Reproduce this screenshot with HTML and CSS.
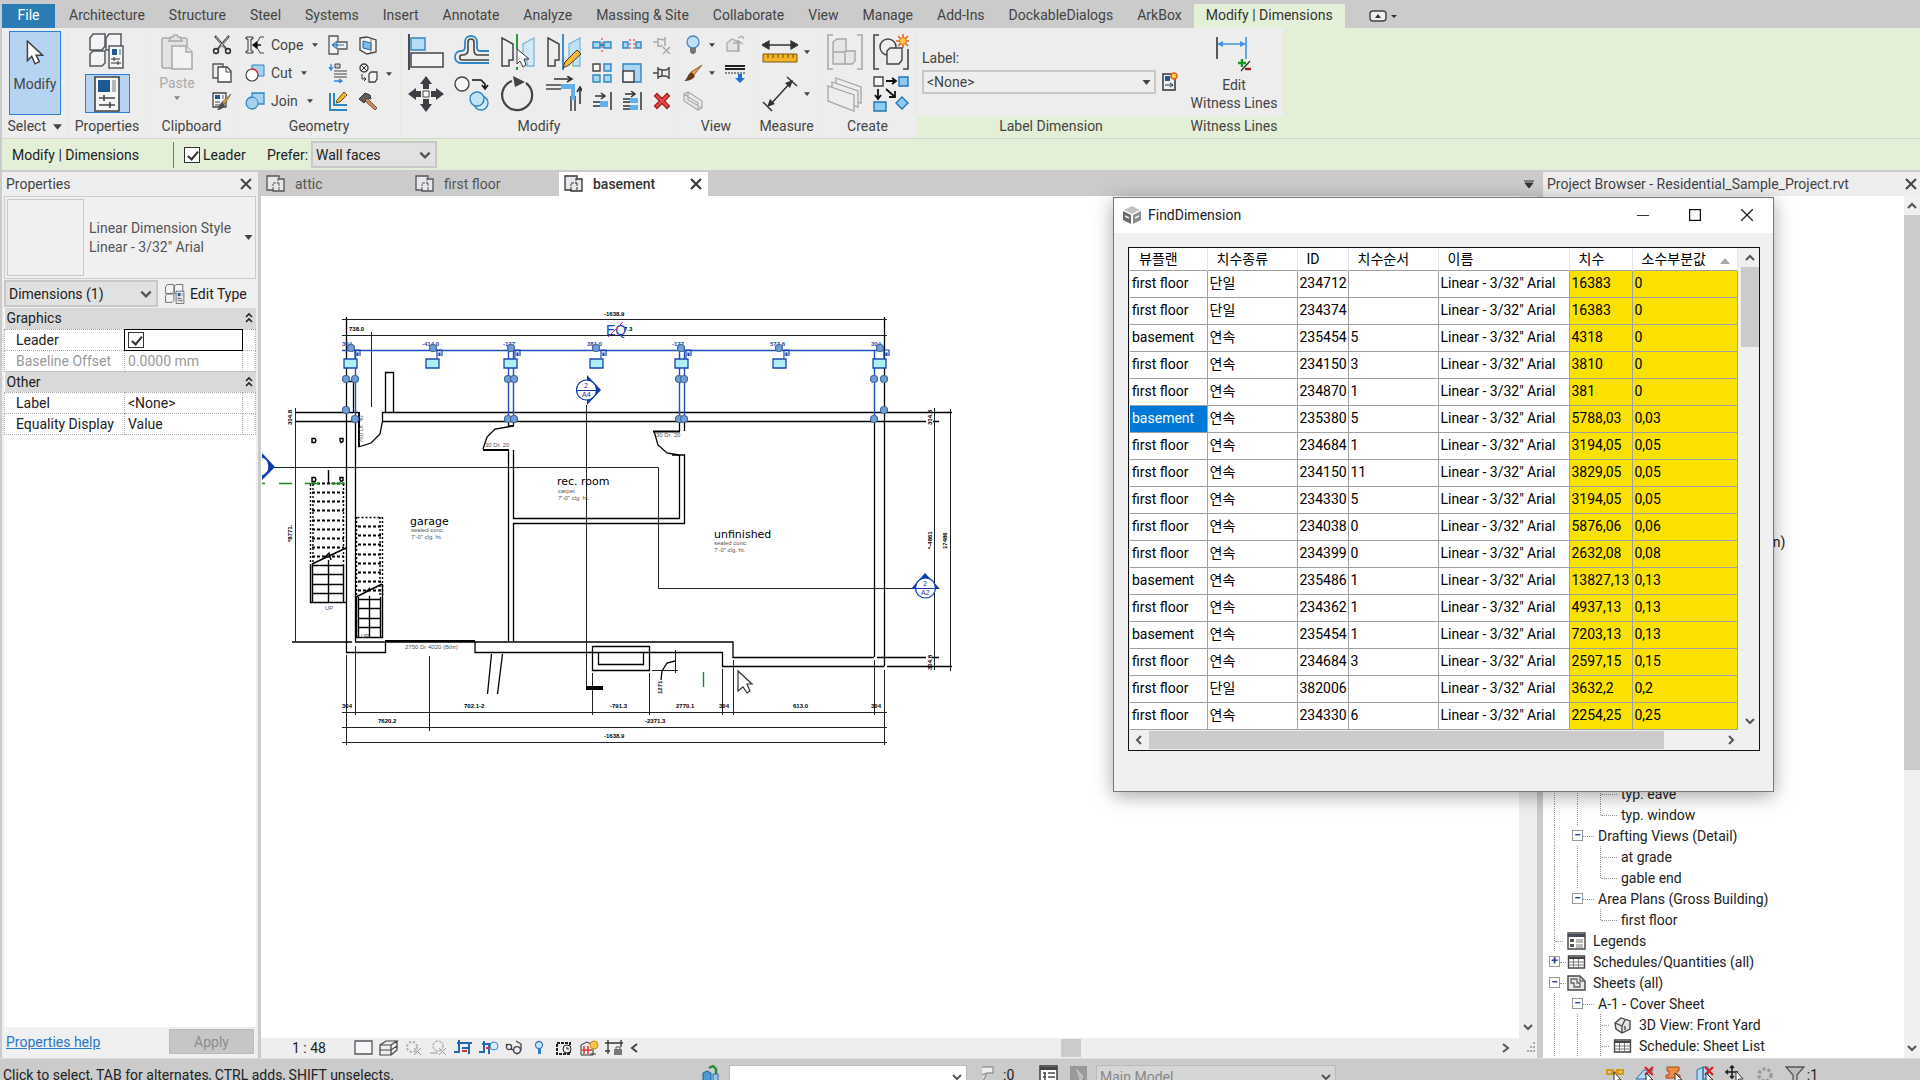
FILE: index.html
```html
<!DOCTYPE html>
<html lang="ko">
<head>
  <meta charset="UTF-8" />
  <meta name="viewport" content="width=device-width, initial-scale=1.0"/>
  <title>Residential_Sample_Project.rvt</title>
  <link rel="stylesheet" href="styles.css">
</head>
<body>

  <!-- shared icon shapes -->
  <svg class="defs" aria-hidden="true">
    <symbol id="caret" viewBox="0 0 8 5"><path d="M0 0h8L4 5z" fill="#444"/></symbol>
    <symbol id="chev-down" viewBox="0 0 12 12"><path d="M2 4l4 4 4-4" fill="none" stroke="currentColor" stroke-width="2"/></symbol>
    <symbol id="cross" viewBox="0 0 12 12"><path d="M1 1l10 10M11 1L1 11" stroke="currentColor" stroke-width="2"/></symbol>
    <symbol id="cursor" viewBox="0 0 16 24"><path d="M1 1v18l4-4 3 7 4-2-3-6h6z" fill="#fff" stroke="#444" stroke-width="1.4"/></symbol>
    <symbol id="sheet" viewBox="0 0 20 18"><path d="M1 1h12v3h5v12H7v-1H1z" fill="#e6e8ec" stroke="currentColor" stroke-width="1.3"/><path d="M7 15V9M12 3v5M7 8h6M13 8v7" fill="none" stroke="currentColor" stroke-dasharray="3 1"/></symbol>
    <symbol id="grid4" viewBox="0 0 36 36">
      <g fill="#f4f4f5" stroke="#555a62" stroke-width="1.5"><path d="M1 5l3-4h12v12l-3 4H1zM17 5l3-4h12v12l-3 4H17zM1 21l3-3h12v12l-3 3H1z"/><path d="M20 13h14v22H20z"/></g>
      <path d="M23 16h5v6h-5z" fill="#1f5a95"/><path d="M30 16h2v6h-2z" fill="#aaa"/><path d="M22 26h9M22 30h10M25 24v4M29 28v4" stroke="#333"/>
    </symbol>
    <symbol id="table" viewBox="0 0 18 14"><path d="M1 1h16v12H1z" fill="#fff" stroke="#444" stroke-width="1.4"/><path d="M1 2h16v2H1z" fill="#444"/><path d="M1 7h16M1 10h16M6 4v9M11 4v9" stroke="#777"/></symbol>
    <symbol id="lock" viewBox="0 0 20 22">
      <path d="M12 9V1h5v6M14 7V4h1v3" fill="none" stroke="#1847b0" stroke-width="1.2"/>
      <path d="M1 10h13v9H1z" fill="#aef0f8" stroke="#1847b0" stroke-width="1.3"/>
    </symbol>
    <symbol id="redx" viewBox="0 0 16 16"><path d="M2 4l2-2 4 4 4-4 2 2-4 4 4 4-2 2-4-4-4 4-2-2 4-4z" fill="#ee4a44" stroke="#9c2020"/></symbol>
  </svg>

  <nav class="tabs">
    <a class="file" href="#">File</a>
    <a href="#">Architecture</a>
    <a href="#">Structure</a>
    <a href="#">Steel</a>
    <a href="#">Systems</a>
    <a href="#">Insert</a>
    <a href="#">Annotate</a>
    <a href="#">Analyze</a>
    <a href="#">Massing &amp; Site</a>
    <a href="#">Collaborate</a>
    <a href="#">View</a>
    <a href="#">Manage</a>
    <a href="#">Add-Ins</a>
    <a href="#">DockableDialogs</a>
    <a href="#">ArkBox</a>
    <a class="active" href="#">Modify | Dimensions</a>
    <button class="collapse" aria-label="Minimize ribbon">
      <svg width="30" height="12"><rect x="1" y="1" width="16" height="10" rx="3" fill="#eee" stroke="#444" stroke-width="1.4"/><path d="M6 8l3-4 3 4zM22 5h6l-3 3z" fill="#333"/></svg>
    </button>
  </nav>

  <div class="ribbon">
    <section class="panel">
      <div class="tools">
        <button class="big pressed"><svg width="18" height="26"><use href="#cursor"/></svg>Modify</button>
      </div>
      <h2>Select <svg width="9" height="6"><use href="#caret"/></svg></h2>
    </section>

    <section class="panel">
      <div class="tools stack">
        <button aria-label="Type properties"><svg width="36" height="36"><use href="#grid4"/></svg></button>
        <button class="pressed wide" aria-label="Properties"><svg width="28" height="36" viewBox="0 0 28 36"><path d="M2 1h24v34H2z" fill="#f6f6f6" stroke="#444" stroke-width="1.6"/><path d="M5 4h12v12H5z" fill="#1e5791"/><path d="M19 4h4v12h-4z" fill="#b4b8bd"/><path d="M6 22h16M6 29h16M11 19v6M17 26v6" stroke="#444" stroke-width="1.6"/></svg></button>
      </div>
      <h2>Properties</h2>
    </section>

    <section class="panel">
      <div class="tools clip">
        <button class="big off"><svg width="32" height="36" viewBox="0 0 32 36"><g fill="#e3e3e3" stroke="#a9a9a9" stroke-width="1.5"><rect x="1" y="4" width="25" height="30" rx="2"/><path d="M8 7l2-4h2l1-2h3l1 2h2l2 4z"/><path d="M11 12h14l6 6v17H11z" fill="#f2f2f2"/><path d="M25 12v6h6"/></g></svg>Paste<svg width="6" height="4" class="off-caret"><use href="#caret"/></svg></button>
        <div class="grid one">
          <button aria-label="Cut to clipboard"><svg viewBox="0 0 20 20"><path d="M3 1l11 13M17 1L6 14" stroke="#444" stroke-width="2.4"/><path d="M4 2l9 12M16 2L7 14" stroke="#eee" stroke-width=".7"/><circle cx="4" cy="16" r="2.4" fill="none" stroke="#333" stroke-width="1.6"/><circle cx="16" cy="16" r="2.4" fill="none" stroke="#333" stroke-width="1.6"/></svg></button>
          <button aria-label="Copy to clipboard"><svg viewBox="0 0 20 20"><path d="M1 1h10v14H1z" fill="#eee" stroke="#555" stroke-width="1.3"/><path d="M6 4h9l4 4v11H6z" fill="#fafafa" stroke="#444" stroke-width="1.3"/><path d="M14 4v5h5" fill="none" stroke="#444"/></svg></button>
          <button aria-label="Match type"><svg viewBox="0 0 20 20"><path d="M1 2h13v14H1z" fill="#f5f5f5" stroke="#444" stroke-width="1.3"/><path d="M3 4h5v4H3z" fill="#1e5791"/><path d="M10 4h2v4h-2z" fill="#aaa"/><path d="M3 11h5M3 14h5" stroke="#444"/><path d="M19 3l-6 10-3-2z" fill="#c9a14a" stroke="#5a4a22" stroke-width=".6"/><path d="M5 19c2-1 2-6 5-8l3 3c-1 3-5 5-8 5z" fill="#4a4d52"/></svg></button>
        </div>
      </div>
      <h2>Clipboard</h2>
    </section>

    <section class="panel">
      <div class="tools geo">
        <div class="labels">
          <button><svg viewBox="0 0 20 20"><path d="M1 2h7v2H6v12h2v2H1v-2h2V4H1z" fill="#eee" stroke="#333"/><path d="M8 10h8M8 10l4-3v6z" stroke="#111" stroke-width="1.4"/><path d="M19 2h-4l-2 4M19 18h-4l-2-4" fill="none" stroke="#444"/></svg>Cope<svg class="car"><use href="#caret"/></svg></button>
          <button><svg viewBox="0 0 20 20"><path d="M7 2h12v11H7z" fill="#a6d2ee" stroke="#2d87c4"/><circle cx="7" cy="12" r="6" fill="#fff" stroke="#444" stroke-width="1.2"/><path d="M7 6a6 6 0 0 1 6 6" fill="none" stroke="#e33" stroke-width="1.4"/></svg>Cut<svg class="car"><use href="#caret"/></svg></button>
          <button><svg viewBox="0 0 20 20"><path d="M7 2h12v11h-6a6 6 0 1 1-6-7z" fill="#a6d2ee" stroke="#2d87c4" stroke-width="1.3"/><path d="M7 6a6 6 0 0 1 6 6" fill="none" stroke="#2d87c4"/></svg>Join<svg class="car"><use href="#caret"/></svg></button>
        </div>
        <div class="grid two gap10">
          <button aria-label="Wall joins"><svg viewBox="0 0 20 20"><path d="M1 1h9v6h9v7h-9v5H1z" fill="#f3f3f3" stroke="#555" stroke-width="1.3"/><path d="M4 10h12M4 10l5-4v8z" stroke="#2d6da8" fill="#8ec4ea"/></svg></button>
          <button aria-label="Split face"><svg viewBox="0 0 20 20"><path d="M2 3l7-1 9 3v12l-9 2-7-4z" fill="#f3f3f3" stroke="#444" stroke-width="1.3"/><path d="M5 6l8 2v7l-8-2z" fill="#7dbdea" stroke="#2268ac"/><path d="M13 4v14" stroke="#777"/></svg></button>
          <button aria-label="Beam joins"><svg viewBox="0 0 20 20"><path d="M3 1v6M1 4l2 3 2-3M6 18h7M11 16l3 2-3 2" stroke="#2a86d8" fill="none" stroke-width="1.3"/><path d="M7 1h5v4H7z" fill="#ccc" stroke="#444"/><path d="M6 8h13M6 11h13M6 14h13" stroke="#444" stroke-width="1.2"/></svg></button>
          <button aria-label="Paint"><svg viewBox="0 0 20 20"><circle cx="6" cy="5" r="4" fill="none" stroke="#444" stroke-width="1.4"/><path d="M3 2l6 6M9 2L3 8M4 11v5h4M6 14l2 2-2 2" stroke="#333" fill="none"/><path d="M11 11l2-2h6v7l-2 3h-6z" fill="#f5f5f5" stroke="#444" stroke-width="1.3"/></svg></button>
          <button aria-label="Edit wall"><svg viewBox="0 0 20 20"><path d="M2 2v17h17M6 2v12h13" fill="none" stroke="#2d87c4" stroke-width="2"/><path d="M8 12l1-3 7-8 3 3-7 7z" fill="#f2b632" stroke="#6a4d12"/></svg></button>
          <button aria-label="Demolish"><svg viewBox="0 0 20 20"><path d="M1 8l6-6 5 2 1 4-3-1-4 5z" fill="#5b5e63" stroke="#333"/><path d="M9 7l10 10-2 2L7 10z" fill="#c98b63" stroke="#5a3a22" stroke-width=".8"/></svg></button>
        </div>
        <svg class="car"><use href="#caret"/></svg>
      </div>
      <h2>Geometry</h2>
    </section>

    <section class="panel">
      <div class="tools modify">
        <div class="grid bigs four">
          <button aria-label="Align"><svg viewBox="0 0 36 36"><path d="M1 0v36" stroke="#222" stroke-width="1.6"/><path d="M3 4h14v12H3z" fill="#b5dcf4" stroke="#2d87c4" stroke-width="1.4"/><path d="M3 19h32v14H3z" fill="#f4f4f5" stroke="#444" stroke-width="1.5"/></svg></button>
          <button aria-label="Offset"><svg viewBox="0 0 36 36"><path d="M35 17h-9c-2 0-3-2-3-4V8c0-8-12-8-12 0v5c0 3-2 4-4 4-8 0-8 12 0 12h28" fill="none" stroke="#2d87c4" stroke-width="1.8"/><path d="M35 21H24c-3 0-4-2-4-5V8c0-4-6-4-6 0v8c0 4-2 5-6 5-3 0-3 5 0 5h27" fill="none" stroke="#444" stroke-width="1.6"/></svg></button>
          <button aria-label="Mirror, pick axis"><svg viewBox="0 0 36 36"><path d="M2 4l11 6v16H9v6H2z" fill="#eee" stroke="#444" stroke-width="1.5"/><path d="M34 4l-11 6v16h4v6h7z" fill="#d3e9f6" stroke="#7fb6da" stroke-width="1.3"/><path d="M17 0v36" stroke="#2c9a3c" stroke-width="2" stroke-dasharray="15 18"/><path d="M17 15v15l3-3 3 6 3-2-2-6h5z" fill="#fff" stroke="#333"/></svg></button>
          <button aria-label="Mirror, draw axis"><svg viewBox="0 0 36 36"><path d="M2 4l11 6v16H9v6H2z" fill="#eee" stroke="#444" stroke-width="1.5"/><path d="M34 4l-11 6v16h4v6h7z" fill="#bfe0f5" stroke="#7fb6da" stroke-width="1.3"/><path d="M17 0v36" stroke="#3b8fd0" stroke-width="2"/><path d="M17 34l2-6 12-12 4 4-12 11z" fill="#f6b93b" stroke="#4c3a14"/></svg></button>
          <button aria-label="Move"><svg viewBox="0 0 36 36"><path d="M18 0l6 8h-3v5h-6V8h-3zM18 36l6-8h-3v-5h-6v5h-3zM0 18l8-6v3h5v6H8v3zM36 18l-8-6v3h-5v6h5v3z" fill="#3c3e43"/><path d="M15 15h6v6h-6z" fill="#fff" stroke="#444"/></svg></button>
          <button aria-label="Copy"><svg viewBox="0 0 36 36"><circle cx="8" cy="8" r="7" fill="#f5f5f5" stroke="#444" stroke-width="1.4"/><path d="M18 4h9l4 4v4M28 9l3 4 3-4" fill="none" stroke="#111" stroke-width="1.6"/><circle cx="27" cy="27" r="7" fill="#d4ebf8" stroke="#2d87c4" stroke-width="1.4"/><circle cx="23" cy="23" r="7" fill="#c4e4f6" stroke="#2d87c4" stroke-width="1.4"/></svg></button>
          <button aria-label="Rotate"><svg viewBox="0 0 36 36"><path d="M26 7a15 15 0 1 1-14-2" fill="none" stroke="#444" stroke-width="2.2"/><path d="M13 0l12 6-10 5z" fill="#444"/></svg></button>
          <button aria-label="Trim to corner"><svg viewBox="0 0 36 36"><path d="M8 3h17M21 0l5 3-5 3M34 28V12M31 16l3-5 3 5" fill="none" stroke="#333" stroke-width="1.6"/><path d="M0 9h15M0 13h15M25 20v15M29 20v15" stroke="#444" stroke-width="1.6"/><path d="M15 8h14v16h-4V13H15z" fill="#5fb0ec"/></svg></button>
        </div>
        <div class="grid three">
          <button aria-label="Split"><svg viewBox="0 0 20 20"><path d="M1 7h7v6H1zM12 7h7v6h-7z" fill="#a9d6f2" stroke="#2d87c4" stroke-width="1.4"/><path d="M8 10h4" stroke="#2d87c4" stroke-width="2"/><path d="M10 3v14" stroke="#d22" stroke-dasharray="2 2"/></svg></button>
          <button aria-label="Split with gap"><svg viewBox="0 0 20 20"><path d="M1 7h5v6H1zM14 7h5v6h-5z" fill="#a9d6f2" stroke="#2d87c4" stroke-width="1.4"/><path d="M8 4v12M12 4v12" stroke="#d22" stroke-dasharray="2 2"/></svg></button>
          <button aria-label="Unpin"><svg viewBox="0 0 20 20"><path d="M1 7h5M6 3v9M6 4l7 1M6 11h5M13 2v9M11 12l7 7M18 12l-7 7" fill="none" stroke="#aaa" stroke-width="1.5"/></svg></button>
          <button aria-label="Array"><svg viewBox="0 0 20 20"><g fill="#a9d6f2" stroke="#2d87c4" stroke-width="1.4"><path d="M1 1h7v7H1z" fill="#f5f5f5" stroke="#444"/><path d="M12 1h7v7h-7zM1 12h7v7H1zM12 12h7v7h-7z"/></g></svg></button>
          <button aria-label="Scale"><svg viewBox="0 0 20 20"><path d="M1 1h18v18H1z" fill="#a9d6f2" stroke="#2d87c4" stroke-width="1.4"/><path d="M1 8h11v11H1z" fill="#f5f5f5" stroke="#444" stroke-width="1.4"/></svg></button>
          <button aria-label="Pin"><svg viewBox="0 0 20 20"><path d="M1 10h5M6 4v12M6 6l4 1h4l3-2M6 14l4-1h4l3 2M10 7v6M17 4v12" fill="none" stroke="#444" stroke-width="1.4"/></svg></button>
          <button aria-label="Trim single"><svg viewBox="0 0 20 20"><path d="M3 5h9M9 2l4 3-4 3M19 1v18" fill="none" stroke="#333" stroke-width="1.5"/><path d="M1 11h7M1 15h7" stroke="#333" stroke-width="1.4"/><path d="M8 10h8v6H8z" fill="#5fb0ec"/></svg></button>
          <button aria-label="Trim multiple"><svg viewBox="0 0 20 20"><path d="M3 3h9M9 0l4 3-4 3M19 1v18" fill="none" stroke="#333" stroke-width="1.5"/><path d="M1 8h7M1 11h7M1 15h7M1 18h7" stroke="#333" stroke-width="1.4"/><path d="M8 7h8v5H8zM8 14h8v5H8z" fill="#5fb0ec"/></svg></button>
          <button aria-label="Delete"><svg viewBox="0 0 16 16"><use href="#redx"/></svg></button>
        </div>
      </div>
      <h2>Modify</h2>
    </section>

    <section class="panel">
      <div class="tools">
        <div class="grid viewgrid">
          <button aria-label="Hide"><svg viewBox="0 0 20 20"><circle cx="10" cy="7" r="6" fill="#bfe0fa" stroke="#4b86bd" stroke-width="1.3"/><path d="M7 13h6v4l-2 2H9l-2-2z" fill="#777"/></svg></button>
          <svg class="car"><use href="#caret"/></svg>
          <button aria-label="Override graphics"><svg viewBox="0 0 20 20"><path d="M2 8l5-4 6 3v9H2zM8 8h6v9M13 3l4-2 2 3M12 5l6 4" fill="#e4e4e4" stroke="#aaa" stroke-width="1.3"/></svg></button>
          <button aria-label="Linework color"><svg viewBox="0 0 20 20"><path d="M19 2l-8 10-3-3z" fill="#e2a052" stroke="#7a4b1c" stroke-width=".8"/><path d="M1 18c3-1 3-6 7-9l4 4c-2 4-7 5-11 5z" fill="#6e3b1a"/></svg></button>
          <svg class="car"><use href="#caret"/></svg>
          <button aria-label="Linework"><svg viewBox="0 0 20 20"><path d="M0 3h20M0 6h20" stroke="#222" stroke-width="2"/><path d="M0 10h20" stroke="#222" stroke-dasharray="2 1"/><path d="M13 11h4v4h3l-5 5-5-5h3z" fill="#1f72c8"/></svg></button>
          <button aria-label="Selection box"><svg viewBox="0 0 20 20"><path d="M1 3l4-2 14 9v7l-4 2L1 10zM5 1v8l14 8M1 3l14 9v7" fill="#e9e9e9" stroke="#aaa" stroke-width="1.2"/></svg></button>
        </div>
      </div>
      <h2>View</h2>
    </section>

    <section class="panel">
      <div class="tools">
        <div class="grid measure bigs">
          <button aria-label="Measure"><svg viewBox="0 0 36 36"><path d="M3 11h30M0 11l7-4v8zM36 11l-7-4v8z" stroke="#333" fill="#333" stroke-width="1.3"/><path d="M1 20h34v8H1z" fill="#f3b428" stroke="#7a5a14"/><path d="M6 20v4M11 20v4M16 20v4M21 20v4M26 20v4M31 20v4" stroke="#6b4c0c"/></svg></button>
          <svg class="car"><use href="#caret"/></svg>
          <button aria-label="Aligned dimension"><svg viewBox="0 0 36 36"><path d="M8 29L29 6M25 1l10 9M1 26l9 9" stroke="#333" stroke-width="1.5"/><path d="M5 31l3-8 5 5zM31 4l-3 8-5-5z" fill="#333"/></svg></button>
          <svg class="car"><use href="#caret"/></svg>
        </div>
      </div>
      <h2>Measure</h2>
    </section>

    <section class="panel">
      <div class="tools">
        <div class="grid bigs create">
          <button aria-label="Create assembly"><svg viewBox="0 0 36 36"><path d="M6 1H1v34h5M30 1h5v34h-5" fill="none" stroke="#aaa" stroke-width="1.6"/><path d="M6 8l4-3h9v12h9v10l-3 3H6zM6 18h12v12M19 17l-2 2" fill="#e6e6e6" stroke="#a5a5a5" stroke-width="1.4"/></svg></button>
          <button aria-label="Create group"><svg viewBox="0 0 36 36"><path d="M6 1H1v34h5M30 35h5V15" fill="none" stroke="#444" stroke-width="1.6"/><circle cx="15" cy="13" r="8" fill="#eee" stroke="#444" stroke-width="1.5"/><path d="M14 17l3-3h12v12l-3 4H14z" fill="#eee" stroke="#444" stroke-width="1.4"/><path d="M30 0v14M23 7h14M25 2l10 10M35 2L25 12" stroke="#e2681c" stroke-width="1.6"/><circle cx="30" cy="7" r="3.4" fill="#ffcf3f" stroke="#e2681c"/></svg></button>
          <button aria-label="Create parts"><svg viewBox="0 0 36 36"><g fill="#ededed" stroke="#a5a5a5" stroke-width="1.3"><path d="M9 2l25 9v16l-25-9z"/><path d="M5 6l26 9v16L5 22z"/><path d="M1 10l26 9v16L1 25z"/></g></svg></button>
          <button aria-label="Create similar"><svg viewBox="0 0 36 36"><path d="M1 1h9v9H1z" fill="#f3f3f3" stroke="#444" stroke-width="1.4"/><path d="M13 5h10M19 2l4 3-4 3M5 13v9M2 19l3 4 3-4M13 13l9 8M22 15v6h-6" fill="none" stroke="#111" stroke-width="1.8"/><g fill="#8fcaf0" stroke="#2773b4" stroke-width="1.4"><path d="M26 1h9v9h-9zM1 26h12v9H1z"/><path d="M29 21l6 6-6 6-6-6z"/></g></svg></button>
        </div>
      </div>
      <h2>Create</h2>
    </section>

    <section class="panel context">
      <div class="tools labeldim">
        <label for="dim-label">Label:</label>
        <div class="row">
          <div class="combo flat">
            <select id="dim-label"><option>&lt;None&gt;</option></select>
            <svg width="9" height="5"><use href="#caret"/></svg>
          </div>
          <button aria-label="Create parameter"><svg width="16" height="20" viewBox="0 0 16 20"><path d="M1 2h12v16H1z" fill="#eef1f4" stroke="#333" stroke-width="1.5"/><path d="M3 4h5v5H3z" fill="#1e5791"/><path d="M3 13h8M8 11l3 2-3 2" stroke="#333" fill="none"/><circle cx="12" cy="4" r="3" fill="#ffd75a" stroke="#e2681c" stroke-width="1.6"/></svg></button>
        </div>
      </div>
      <h2>Label Dimension</h2>
    </section>

    <section class="panel context">
      <div class="tools">
        <button class="big witness"><svg width="38" height="36" viewBox="0 0 38 36"><path d="M2 1v22" stroke="#333" stroke-width="1.6"/><path d="M31 1v22M3 8h27" stroke="#3f93e0" stroke-width="1.6"/><path d="M2 8l6-3v6zM31 8l-6-3v6z" fill="#3f93e0"/><path d="M27 23v8M23 27h8" stroke="#119b20" stroke-width="2.4"/><path d="M26 35l9-10" stroke="#333" stroke-width="1.3"/><path d="M30 33h6" stroke="#a11c1c" stroke-width="2.4"/></svg>Edit<br>Witness Lines</button>
      </div>
      <h2>Witness Lines</h2>
    </section>
  </div>

  <div class="options">
    <span class="mode">Modify | Dimensions</span>
    <label class="check"><input type="checkbox" checked>Leader</label>
    <label class="prefer" for="prefer">Prefer:</label>
    <div class="combo">
      <select id="prefer"><option>Wall faces</option></select>
      <svg width="14" height="14"><use href="#chev-down"/></svg>
    </div>
  </div>

  <main>
    <aside class="props">
      <div class="title">Properties <button aria-label="Close properties"><svg width="12" height="12"><use href="#cross"/></svg></button></div>
      <div class="typebox">
        <div class="thumb"></div>
        <p>Linear Dimension Style<br>Linear - 3/32" Arial</p>
        <svg width="9" height="5"><use href="#caret"/></svg>
      </div>
      <div class="typerow">
        <div class="combo">
          <select aria-label="Element filter"><option>Dimensions (1)</option></select>
          <svg width="14" height="14"><use href="#chev-down"/></svg>
        </div>
        <button><svg width="20" height="20"><use href="#grid4"/></svg>Edit Type</button>
      </div>
      <table class="params">
        <colgroup><col class="c1"><col class="c2"><col></colgroup>
        <tr class="group"><th colspan="2">Graphics</th><td><svg width="8" height="12" viewBox="0 0 8 12"><path d="M1 5l3-3 3 3M1 10l3-3 3 3" fill="none" stroke="#222" stroke-width="1.6"/></svg></td></tr>
        <tr><th><label for="leader">Leader</label></th><td class="editing"><input type="checkbox" id="leader" checked></td><td></td></tr>
        <tr class="dim"><th>Baseline Offset</th><td>0.0000 mm</td><td></td></tr>
        <tr class="group"><th colspan="2">Other</th><td><svg width="8" height="12" viewBox="0 0 8 12"><path d="M1 5l3-3 3 3M1 10l3-3 3 3" fill="none" stroke="#222" stroke-width="1.6"/></svg></td></tr>
        <tr><th>Label</th><td>&lt;None&gt;</td><td></td></tr>
        <tr><th>Equality Display</th><td>Value</td><td></td></tr>
      </table>
      <div class="propfoot"><a href="#">Properties help</a><button disabled>Apply</button></div>
    </aside>

    <section class="view">
      <div class="viewtabs">
        <button><svg width="20" height="18"><use href="#sheet"/></svg>attic</button>
        <button><svg width="20" height="18"><use href="#sheet"/></svg>first floor</button>
        <button class="active"><svg width="20" height="18"><use href="#sheet"/></svg>basement<svg class="x" width="12" height="12"><use href="#cross"/></svg></button>
        <svg class="more" width="10" height="8"><path d="M0 1h10M1 3h8L5 8z" fill="#333" stroke="#333"/></svg>
      </div>
      <div class="canvas">
        <svg width="1258" height="842" viewBox="261 196 1258 842">
          <!-- walls -->
          <g fill="none" stroke="#000" stroke-width="1.3">
            <path d="M295 412.5H358M382 412.5H952M295 421.5H358M382 421.5H926M933 421.5H939"/>
            <path d="M346.5 317V652.5H385.5V641M475 641V652.5H722.5V666.5H884.5M887 666.5H952"/>
            <path d="M355.5 421V641M292 642H352M355 642H733V657.5H874M877 657.5H926M932 657.5H939"/>
            <path d="M884.5 317V666M874.5 421V657"/>
            <path d="M346 381.5H353.5V412M385.5 412V372.5H393.5V412"/>
            <path d="M508.5 450V641M513.5 450V518.5H679.5V455M508.5 419V426H513.5V419M513.5 641V523.5H684.5V455H672M679.5 419V431M684.5 419V431"/>
            <path d="M592.5 646.5H649.5V670.5H592.5zM598.5 653V664.5H643.5V653"/>
            <path d="M358.5 447L371 443 380 434 382.5 421V412M483 449L487 437 495 429 513 426M654 431L658 445 667 453 679 455M675 661L667 663 662 671 661 680"/>
            <path d="M491.5 654L487.5 694M502.5 654L497.5 694"/>
          </g>
          <g fill="none" stroke="#000" stroke-width="2"><path d="M359 412V447M483 450H509M653 431.5H680M385 641H475"/></g>

          <!-- dimension and section lines -->
          <g fill="none" stroke="#222">
            <path d="M342 319.5H887M342 335.5H887M371.5 332V407M295.5 408V642"/>
            <path d="M934.5 408V670M950.5 409V671"/>
            <path d="M342 712.5H887M342 727.5H887M342 742.5H887"/>
            <path d="M346.5 655V745M355.5 646V715M429.5 656V731M592.5 673V715M649.5 673V715M722.5 669V715M733.5 660V715M874.5 660V715M884.5 670V745"/>
            <path d="M273 467.5H658.5V588.5H915M586.5 405V688M652 670.5H678M675.5 650V673"/>
          </g>
          <path d="M586 686h17v4h-17z"/>

          <!-- stairs -->
          <g fill="none" stroke="#000" stroke-width="1.4">
            <g stroke-dasharray="2 2"><path d="M310.5 484V564M313 484V564M343.5 484V564M356.5 517V596M382.5 517V596M380 517V596M357.5 517.5H382"/></g>
            <g stroke-width="2" stroke-dasharray="3 2"><path d="M312 483.5H344M312 492.5H344M312 501.5H344M312 510.5H344M312 520.5H344M312 529.5H344M312 538.5H344M312 547.5H344M312 556.5H344"/><path d="M358 526.5H381M358 535.5H381M358 544.5H381M358 554.5H381M358 563.5H381M358 572.5H381M358 581.5H381M358 590.5H381"/></g>
            <path d="M310.5 564V602.5H346M312.5 564V602M343.5 564V602M328.5 560V602M312 565.5H344M312 574.5H344M312 584.5H344M312 593.5H344M312 564L346 548M325 557L329 553 331 560M328.5 470V483"/>
            <path d="M356.5 597V637.5H382.5V584M358.5 597V637M380.5 597V637M369.5 596V637M358 599.5H381M358 608.5H381M358 618.5H381M358 627.5H381M356 597L382 584M366 592L370 588"/>
            <path d="M312 438.5h3l1 2-1 2h-3zM340 438.5h3v3l-2 1-1-2zM312 477.5h3l1 2-1 2h-3zM340 477.5h3v3l-2 1-1-2z"/>
          </g>
          <path d="M262 483.5H265M279 483.5H292M305 483.5H319M331 483.5H345M703.5 672V687" stroke="#1c8a1c" stroke-width="1.4"/>

          <g class="cad">
            <text x="604" y="316">-1638.9</text><text x="349" y="331">738.0</text><text x="624" y="331">7.3</text>
            <text x="342" y="708">304</text><text x="464" y="708">702.1-2</text><text x="610" y="708">-791.3</text><text x="676" y="708">2770.1</text><text x="719" y="708">304</text><text x="793" y="708">613.0</text><text x="871" y="708">304</text>
            <text x="378" y="723">7620.2</text><text x="645" y="723">-2371.3</text><text x="604" y="738">-1638.9</text>
            <text transform="translate(292 425) rotate(-90)">304.8</text><text transform="translate(292 542) rotate(-90)">*8771.</text>
            <text transform="translate(932 425) rotate(-90)">304.8</text><text transform="translate(932 549) rotate(-90)">*-4861</text><text transform="translate(947 549) rotate(-90)">17486</text><text transform="translate(932 670) rotate(-90)">304.8</text>
            <text transform="translate(662 694) rotate(-90)">1271</text>
          </g>
          <g class="cad blue">
            <text x="342" y="346">304</text><text x="422" y="346">-414.0</text><text x="503" y="346">-127</text><text x="587" y="346">381.0</text><text x="672" y="346">-127</text><text x="770" y="346">572.6</text><text x="871" y="346">304</text>
          </g>
          <g class="room">
            <text x="410" y="525">garage</text><text x="557" y="485">rec. room</text><text x="714" y="538">unfinished</text>
          </g>
          <g class="note">
            <text x="411" y="532">sealed conc.</text><text x="411" y="539">7'-0" clg. ht.</text>
            <text x="558" y="493">carpet</text><text x="558" y="500">7'-0" clg. ht.</text>
            <text x="714" y="545">sealed conc.</text><text x="714" y="552">7'-0" clg. ht.</text>
            <text x="405" y="649">2750 Dr 4020 (Bthr)</text><text x="485" y="447">30 Dr. 20</text><text x="656" y="437">30 Dr. 20</text>
            <text x="325" y="610">UP</text><text x="361" y="638">UP</text>
            <text transform="translate(363 443) rotate(-90)">760 Dr. 40</text>
          </g>

          <!-- selected dimension string -->
          <g fill="none" stroke="#1c50c0" stroke-width="1.4">
            <path d="M342 350.5H884M355.5 350V419M508.5 350V419M513.5 350V419M679.5 350V419M684.5 350V419M874.5 350V419"/>
          </g>
          <g fill="#6d9fe0" stroke="#48668f" stroke-width="1.2">
            <circle cx="351" cy="348" r="3.5"/><circle cx="433" cy="348" r="3.5"/><circle cx="511" cy="348" r="3.5"/><circle cx="596" cy="348" r="3.5"/><circle cx="681" cy="348" r="3.5"/><circle cx="779" cy="348" r="3.5"/><circle cx="880" cy="348" r="3.5"/>
            <circle cx="346" cy="379" r="3.5"/><circle cx="355" cy="379" r="3.5"/><circle cx="508" cy="379" r="3.5"/><circle cx="514" cy="379" r="3.5"/><circle cx="679" cy="379" r="3.5"/><circle cx="684" cy="379" r="3.5"/><circle cx="874" cy="379" r="3.5"/><circle cx="884" cy="379" r="3.5"/>
            <circle cx="346" cy="410" r="3.5"/><circle cx="355" cy="419" r="3.5"/><circle cx="508" cy="419" r="3.5"/><circle cx="514" cy="419" r="3.5"/><circle cx="679" cy="419" r="3.5"/><circle cx="684" cy="419" r="3.5"/><circle cx="874" cy="419" r="3.5"/><circle cx="884" cy="410" r="3.5"/>
          </g>
          <use href="#lock" x="343" y="349" width="20" height="22"/><use href="#lock" x="425" y="349" width="20" height="22"/><use href="#lock" x="503" y="349" width="20" height="22"/><use href="#lock" x="589" y="349" width="20" height="22"/><use href="#lock" x="674" y="349" width="20" height="22"/><use href="#lock" x="772" y="349" width="20" height="22"/><use href="#lock" x="872" y="349" width="20" height="22"/>
          <text class="eq" x="606" y="335">EQ</text>
          <path d="M608 337L623 322" stroke="#c030b0"/>

          <!-- section heads -->
          <g fill="#0d3cae">
            <path d="M587 375L601 390 587 405 587 400 596 390 587 381z"/><path d="M911 589L925 573 940 589 934 589 925 579 916 589z"/><path d="M262 453L275 467 262 480 262 475 268 467 262 460z"/>
          </g>
          <g fill="#fff" stroke="#0d3cae" stroke-width="1.2"><circle cx="586.5" cy="390" r="10"/><circle cx="925.5" cy="588" r="10"/><path d="M576 390.5H597M915 588.5H936"/><path d="M262 457a10 10 0 0 1 0 19"/></g>
          <g class="head"><text x="584" y="388">2</text><text x="582" y="397">A4</text><text x="923" y="586">2</text><text x="921" y="595">A2</text></g>
          <path d="M738 671v20l5-4 4 6 3-2-3-7h5z" fill="#fff" stroke="#333" stroke-width="1.2"/>
        </svg>
      </div>
      <div class="vscroll"><svg width="12" height="12"><use href="#chev-down"/></svg></div>
      <div class="viewbar">
        <span class="scale">1 : 48</span>
        <svg width="20" height="18" viewBox="0 0 20 18"><path d="M1 2h17v13H1z" fill="#f4f6f9" stroke="#555" stroke-width="1.3"/></svg>
        <svg width="20" height="18" viewBox="0 0 20 18"><path d="M1 6h11v10H1zM1 6l6-4h11l-6 4M18 2v9l-6 5M1 11h11l6-4" fill="none" stroke="#444" stroke-width="1.2"/></svg>
        <svg width="20" height="18" viewBox="0 0 20 18"><circle cx="8" cy="8" r="5" fill="none" stroke="#aaa" stroke-width="2" stroke-dasharray="2 2"/><path d="M10 9l7 7M17 9l-7 7" stroke="#999"/></svg>
        <svg width="20" height="18" viewBox="0 0 20 18"><circle cx="9" cy="7" r="5" fill="none" stroke="#bbb" stroke-width="1.5" stroke-dasharray="3 1"/><path d="M1 14h8M10 9l7 7M17 9l-7 7" stroke="#999"/></svg>
        <svg width="20" height="18" viewBox="0 0 20 18"><path d="M3 4h15M5 1v13M15 4v11M0 13h5M8 9h6" fill="none" stroke="#2568ad" stroke-width="2"/><path d="M8 12h5" stroke="#d33" stroke-width="2"/></svg>
        <svg width="20" height="18" viewBox="0 0 20 18"><path d="M3 5h11M5 2v12M0 13h5M10 5v10" fill="none" stroke="#2568ad" stroke-width="2"/><path d="M7 9h4" stroke="#d33" stroke-width="2"/><circle cx="15" cy="7" r="4" fill="#d5ecfb" stroke="#3a8bd0"/></svg>
        <svg width="20" height="18" viewBox="0 0 20 18"><path d="M2 5l4 5 4 1 3 4 4-4V5l-5-3" fill="none" stroke="#444" stroke-width="1.3"/><circle cx="5" cy="8" r="2.6" fill="#eef" stroke="#444" stroke-width="1.3"/><circle cx="13" cy="11" r="3.4" fill="#eef" stroke="#444" stroke-width="1.3"/></svg>
        <svg width="20" height="18" viewBox="0 0 20 18"><circle cx="10" cy="6" r="3.5" fill="#cfe8fb" stroke="#2f7fc6" stroke-width="1.3"/><path d="M9 10h3v5H9z" fill="#2f7fc6"/></svg>
        <svg width="20" height="18" viewBox="0 0 20 18"><path d="M3 4h13v11H3z" fill="none" stroke="#222" stroke-width="2" stroke-dasharray="3 1"/><circle cx="13" cy="10" r="4" fill="#eee" stroke="#222"/><path d="M13 8v2h2" stroke="#222" fill="none"/></svg>
        <svg width="20" height="18" viewBox="0 0 20 18"><path d="M2 6l6-3 6 3v10H2z" fill="#eee" stroke="#333"/><path d="M3 11h10M5 7v8M9 7v8" stroke="#d33" stroke-width="1.5"/><circle cx="15" cy="6" r="4" fill="#ffc64b" stroke="#d0861c"/><path d="M11 15h6" stroke="#333"/></svg>
        <svg width="20" height="18" viewBox="0 0 20 18"><path d="M1 4h18M4 1v14M17 1v7M1 12h5" fill="none" stroke="#333" stroke-width="1.3"/><path d="M10 10h8v6h-8z" fill="#777"/><path d="M12 10V8h4v2" fill="none" stroke="#555"/></svg>
        <svg width="10" height="12" viewBox="0 0 10 12"><path d="M8 2L3 6l5 4" fill="none" stroke="#444" stroke-width="2"/></svg>
        <div class="track"><div class="thumb"></div></div>
        <svg width="12" height="12" viewBox="0 0 12 12"><path d="M3 2l5 4-5 4" fill="none" stroke="#555" stroke-width="2"/></svg>
        <svg class="grip" width="12" height="12"><path d="M8 1h2M5 5h2M8 5h2M2 9h2M5 9h2M8 9h2" stroke="#aaa" stroke-width="2"/></svg>
      </div>
    </section>

    <aside class="browser">
      <div class="title">Project Browser - Residential_Sample_Project.rvt <button aria-label="Close project browser"><svg width="12" height="12"><use href="#cross"/></svg></button></div>
      <div class="treebox">
        <ul class="tree">
          <li class="first"><i class="g"></i><b class="box">−</b><i class="d"></i>Elevations (Building Elevation)</li>
          <li class="fill"><i class="g"></i><i class="g"></i><i class="g"></i></li>
          <li><i class="g"></i><i class="g"></i><i class="g t"></i>typ. eave</li>
          <li><i class="g"></i><i class="g"></i><i class="g t e"></i>typ. window</li>
          <li><i class="g"></i><b class="box">−</b><i class="d"></i>Drafting Views (Detail)</li>
          <li><i class="g"></i><i class="g"></i><i class="g t"></i>at grade</li>
          <li><i class="g"></i><i class="g"></i><i class="g t e"></i>gable end</li>
          <li><i class="g"></i><b class="box">−</b><i class="d"></i>Area Plans (Gross Building)</li>
          <li><i class="g"></i><i class="n"></i><i class="g t e"></i>first floor</li>
          <li><i class="g s"></i><svg width="19" height="18" viewBox="0 0 19 18"><path d="M1 1h17v16H1z" fill="#fff" stroke="#444" stroke-width="1.4"/><path d="M1 2h17v3H1z" fill="#444b57"/><path d="M3 7h4v3H3zM3 12h4v3H3z" fill="#555"/><path d="M9 8h7M9 10h7M9 13h7M9 15h7" stroke="#777"/></svg>Legends</li>
          <li><b class="box">+</b><i class="d s"></i><svg width="19" height="14"><use href="#table"/></svg>Schedules/Quantities (all)</li>
          <li><b class="box">−</b><i class="d s"></i><svg width="19" height="16" viewBox="0 0 19 16"><path d="M1 1h12l5 5v9H1z" fill="#e7e9ec" stroke="#444" stroke-width="1.4"/><path d="M4 4h6v4h3v4H7V8H4zM13 1v5h5" fill="none" stroke="#666" stroke-width="1.3"/></svg>Sheets (all)</li>
          <li><i class="g"></i><b class="box">−</b><i class="d"></i>A-1 - Cover Sheet</li>
          <li><i class="g"></i><i class="g"></i><i class="g t s"></i><svg width="19" height="18" viewBox="0 0 19 18"><path d="M2 7l6-5 9 3v8l-8 4-6-4z" fill="#e4e6e9" stroke="#444" stroke-width="1.3"/><path d="M2 7l7 3 3-6M9 10v7M12 10v4" fill="none" stroke="#444" stroke-width="1.3"/></svg>3D View: Front Yard</li>
          <li><i class="g"></i><i class="g"></i><i class="g t s"></i><svg width="19" height="14"><use href="#table"/></svg>Schedule: Sheet List</li>
        </ul>
        <div class="treescroll">
          <svg class="up" width="12" height="12"><use href="#chev-down"/></svg>
          <div class="thumb"></div>
          <svg width="12" height="12"><use href="#chev-down"/></svg>
        </div>
      </div>
    </aside>

    <!-- FindDimension window -->
    <div class="dialog" role="dialog" aria-labelledby="fd-title">
      <header>
        <svg width="20" height="20" viewBox="0 0 20 20"><path d="M10 1l8 4-8 4-8-4z" fill="#c4c4c4"/><path d="M1 6l8 4v9l-8-4z" fill="#6c6c6c"/><path d="M19 6l-8 4v9l8-4z" fill="#8d8d8d"/><path d="M3 11l4 2M13 13l4-2" stroke="#eee" stroke-width="1.5"/></svg>
        <span id="fd-title">FindDimension</span>
        <button aria-label="Minimize"><svg width="12" height="12"><path d="M0 6.5h12" stroke="#333"/></svg></button>
        <button aria-label="Maximize"><svg width="12" height="12"><path d="M.5 .5h11v11H.5z" fill="none" stroke="#111" stroke-width="1.5"/></svg></button>
        <button aria-label="Close"><svg width="12" height="12"><path d="M0 0l12 12M12 0L0 12" stroke="#222" stroke-width="1.3"/></svg></button>
      </header>
      <div class="gridbox">
        <table class="data">
          <colgroup><col class="w1"><col class="w2"><col class="w3"><col class="w4"><col class="w5"><col class="w6"><col></colgroup>
          <thead>
            <tr><th>뷰플랜</th><th>치수종류</th><th>ID</th><th>치수순서</th><th>이름</th><th>치수</th><th>소수부분값<svg width="10" height="6"><path d="M0 6h10L5 0z" fill="#aaa"/></svg></th></tr>
          </thead>
          <tbody id="rows"></tbody>
        </table>
        <div class="gv">
          <svg class="up" width="12" height="12"><use href="#chev-down"/></svg>
          <div class="thumb"></div>
          <svg width="12" height="12"><use href="#chev-down"/></svg>
        </div>
        <div class="gh">
          <svg width="12" height="12" viewBox="0 0 12 12"><path d="M8 2L4 6l4 4" fill="none" stroke="#555" stroke-width="2"/></svg>
          <div class="track"><div class="thumb"></div></div>
          <svg width="12" height="12" viewBox="0 0 12 12"><path d="M4 2l4 4-4 4" fill="none" stroke="#555" stroke-width="2"/></svg>
        </div>
      </div>
    </div>
  </main>

  <footer class="status">
    <span class="hint">Click to select, TAB for alternates, CTRL adds, SHIFT unselects.</span>
    <svg width="20" height="20" viewBox="0 0 20 20"><path d="M2 8l4-2 4 2v10H2z" fill="#4b9ad8" stroke="#1f5f99"/><path d="M8 3l4-2 3 3v7" fill="none" stroke="#2c8a36" stroke-width="2.4"/><path d="M12 9h5v9h-5z" fill="#9fc6e6" stroke="#2a6ca8"/></svg>
    <div class="combo ws"><select aria-label="Workset"><option></option></select><svg width="12" height="12"><use href="#chev-down"/></svg></div>
    <svg width="18" height="18" viewBox="0 0 18 18"><path d="M3 2h11v6H8L4 16M8 8l-5 2" fill="#eee" stroke="#999" stroke-width="1.4"/></svg>
    <span class="num">:0</span>
    <svg class="pad" width="19" height="18" viewBox="0 0 19 18"><path d="M1 1h17v16H1z" fill="#fff" stroke="#333" stroke-width="1.4"/><path d="M1 2h17v3H1z" fill="#444"/><path d="M4 8h3M4 12h3M9 8h7M9 12h7M6 8v7" stroke="#444" stroke-width="1.4"/></svg>
    <svg width="18" height="18" viewBox="0 0 18 18"><path d="M0 1h17v17H0z" fill="#999"/><path d="M6 4l7 7-3 6" fill="#bbb" stroke="#ccc"/></svg>
    <div class="combo model"><select aria-label="Design option"><option>Main Model</option></select><svg width="12" height="12"><use href="#chev-down"/></svg></div>
    <div class="picks">
      <svg viewBox="0 0 20 20"><path d="M2 5h6v4H2zM12 5h6v4h-6zM6 7h8" fill="none" stroke="#d99a12" stroke-width="2"/><path d="M9 7v11l3-3h4z" fill="#fff" stroke="#333"/></svg>
      <svg viewBox="0 0 20 20"><path d="M1 14l8-9h9l-8 9zM1 17h9" fill="#b5dbf3" stroke="#2a6ca8"/><path d="M10 2l8 8M18 2l-8 8" stroke="#d22" stroke-width="2.4"/><path d="M11 8v10l3-3h4z" fill="#fff" stroke="#333"/></svg>
      <svg viewBox="0 0 20 20"><path d="M2 2h12v4h-2v4h3v3H1v-3h3V6H2z" fill="#f08a4b" stroke="#a34a17"/><path d="M10 8v10l3-3h4z" fill="#fff" stroke="#333"/></svg>
      <svg viewBox="0 0 20 20"><path d="M2 5l6-3v14l-6 2zM8 2h5v12H8z" fill="#b5dbf3" stroke="#2a6ca8"/><path d="M10 2l8 8M18 2l-8 8" stroke="#d22" stroke-width="2.4"/><path d="M11 8v10l3-3h4z" fill="#fff" stroke="#333"/></svg>
      <svg viewBox="0 0 20 20"><path d="M7 1v12M1 7h12M5 3l2-2 2 2M3 5L1 7l2 2M5 11l2 2 2-2" fill="none" stroke="#222" stroke-width="1.6"/><path d="M11 6v11l3-3h4z" fill="#fff" stroke="#333"/></svg>
      <svg viewBox="0 0 20 20"><circle cx="10" cy="10" r="6" fill="none" stroke="#999" stroke-width="3.4" stroke-dasharray="3 2"/></svg>
      <svg viewBox="0 0 20 20"><path d="M1 2h18l-7 8v8l-4-2v-6z" fill="#b9bdc2" stroke="#555" stroke-width="1.3"/></svg>
      <span>:1</span>
    </div>
  </footer>

  <script>
    const dims = [
      ["first floor", "단일", "234712", "", "16383", "0"],
      ["first floor", "단일", "234374", "", "16383", "0"],
      ["basement", "연속", "235454", "5", "4318", "0"],
      ["first floor", "연속", "234150", "3", "3810", "0"],
      ["first floor", "연속", "234870", "1", "381", "0"],
      ["basement", "연속", "235380", "5", "5788,03", "0,03"],
      ["first floor", "연속", "234684", "1", "3194,05", "0,05"],
      ["first floor", "연속", "234150", "11", "3829,05", "0,05"],
      ["first floor", "연속", "234330", "5", "3194,05", "0,05"],
      ["first floor", "연속", "234038", "0", "5876,06", "0,06"],
      ["first floor", "연속", "234399", "0", "2632,08", "0,08"],
      ["basement", "연속", "235486", "1", "13827,13", "0,13"],
      ["first floor", "연속", "234362", "1", "4937,13", "0,13"],
      ["basement", "연속", "235454", "1", "7203,13", "0,13"],
      ["first floor", "연속", "234684", "3", "2597,15", "0,15"],
      ["first floor", "단일", "382006", "", "3632,2", "0,2"],
      ["first floor", "연속", "234330", "6", "2254,25", "0,25"]
    ];
    const selected = 5;

    const body = document.getElementById("rows");
    dims.forEach((d, i) => {
      const row = document.createElement("tr");
      row.innerHTML = `
        <td class="${i === selected ? "sel" : ""}">${d[0]}</td>
        <td>${d[1]}</td>
        <td>${d[2]}</td>
        <td>${d[3]}</td>
        <td>Linear - 3/32" Arial</td>
        <td class="hl">${d[4]}</td>
        <td class="hl">${d[5]}</td>
      `;
      body.appendChild(row);
    });
  </script>

</body>
</html>
```
FILE: styles.css
```css
* {
  box-sizing: border-box;
}

body {
  margin: 0;
  height: 100vh;
  overflow: hidden;
  display: flex;
  flex-direction: column;
  background: #cbcbcb;
  color: #222;
  font-family: Roboto, "Noto Sans CJK KR", sans-serif;
  font-size: 14px;
  line-height: 20px;
}

button, select, input {
  font: inherit;
  color: inherit;
}

button {
  background: none;
  border: 0;
  padding: 0;
}

svg {
  flex: none;
}

.defs {
  position: absolute;
  width: 0;
  height: 0;
}

/* ribbon tabs */
.tabs {
  display: flex;
  height: 28px;
  padding: 4px 0 0 2px;
  color: #444;
}

.tabs a {
  padding: 0 12px;
  line-height: 23px;
  color: inherit;
  text-decoration: none;
  white-space: nowrap;
}

.tabs .file {
  width: 53px;
  margin-right: 2px;
  text-align: center;
  background: #2b7bb5;
  color: #fff;
}

.tabs .active {
  background: #e3efd7;
  color: #333;
}

.collapse {
  display: flex;
  align-items: center;
  margin-left: 24px;
}

/* ribbon panels */
.ribbon {
  display: grid;
  grid-template-columns: 67px 77px 92px 163px 277px 77px 64px 98px 268px 98px;
  height: 111px;
  margin-left: 2px;
  background: #e3efd7;
  border-bottom: 1px solid #cfd6ca;
  color: #444;
}

.panel {
  display: grid;
  grid-template-rows: 88px 22px;
  background: #ededed;
  border-right: 1px solid #e6ecdf;
}

.panel h2 {
  margin: 0;
  font-size: 14px;
  font-weight: normal;
  line-height: 20px;
  text-align: center;
  white-space: nowrap;
}

.panel h2 svg {
  margin-left: 4px;
  vertical-align: middle;
}

.panel.context {
  background: #e3efd7;
  border: 0;
}

.context .tools {
  background: #ededed;
}

.tools {
  display: flex;
  justify-content: center;
  padding-top: 3px;
}

.tools button {
  display: flex;
  align-items: center;
  justify-content: center;
}

.tools .big {
  flex-direction: column;
  justify-content: flex-start;
  width: 52px;
  height: 84px;
  gap: 3px;
  padding-top: 8px;
}

.tools .pressed {
  background: #b6d3f2;
  border: 1px solid #2f7fd0;
}

.tools .big.pressed svg {
  margin-bottom: 5px;
}

.tools.stack {
  flex-direction: column;
  align-items: center;
  justify-content: flex-start;
  gap: 4px;
}

.stack button {
  height: 39px;
  width: 45px;
}

.tools.clip {
  gap: 5px;
  padding-left: 4px;
}

.tools .off {
  color: #aaa;
  padding-top: 3px;
  gap: 3px;
}

.off-caret {
  opacity: 0.6;
}

.grid {
  display: grid;
  grid-auto-rows: 28px;
  align-content: start;
}

.grid svg {
  width: 20px;
  height: 20px;
}

.one { grid-template-columns: 28px; }
.two { grid-template-columns: 20px 20px; }
.gap10 { column-gap: 10px; }
.three { grid-template-columns: 30px 30px 30px; }
.four { grid-template-columns: 46px 46px 46px 46px; }
.create { grid-template-columns: 46px 46px; }
.viewgrid { grid-template-columns: 20px 18px 28px; }
.measure { grid-template-columns: 40px 14px; }

.bigs {
  grid-auto-rows: 42px;
}

.bigs svg {
  width: 36px;
  height: 36px;
}

.grid .car, .car {
  width: 6px;
  height: 4px;
  align-self: center;
  justify-self: center;
}

.tools.geo, .tools.modify {
  justify-content: flex-start;
  padding-left: 7px;
}

.tools.modify {
  padding-left: 2px;
}

.labels {
  display: grid;
  grid-auto-rows: 28px;
  width: 83px;
}

.labels button {
  justify-content: flex-start;
  gap: 6px;
}

.labels button > svg:first-child {
  width: 20px;
  height: 20px;
}

.labels .car {
  margin-left: 3px;
}

.geo > .car {
  margin-left: 8px;
}

.labeldim {
  flex-direction: column;
  justify-content: flex-start;
  padding: 20px 0 0 5px;
}

.labeldim .row {
  display: flex;
  gap: 6px;
  margin-top: 2px;
}

.combo {
  position: relative;
  display: flex;
  align-items: center;
  background: #e1e1e1;
  border: 2px solid #c8c8c8;
}

.combo select {
  appearance: none;
  width: 100%;
  height: 100%;
  padding: 0 20px 0 3px;
  background: none;
  border: 0;
  color: inherit;
}

.combo svg {
  position: absolute;
  right: 3px;
  color: #555;
}

.combo.flat {
  width: 234px;
  height: 24px;
  background: #eee;
}

.tools .witness {
  width: 96px;
  padding-top: 5px;
  line-height: 18px;
  gap: 0;
}

.witness svg {
  margin-bottom: 4px;
}

/* options bar */
.options {
  display: flex;
  align-items: center;
  height: 31px;
  margin-left: 2px;
  background: #e3efd7;
}

.mode {
  width: 172px;
  padding-left: 10px;
  border-right: 1px solid #777;
  line-height: 26px;
}

.check {
  display: flex;
  align-items: center;
  width: 93px;
  padding-left: 10px;
}

input[type="checkbox"] {
  appearance: none;
  position: relative;
  width: 16px;
  height: 16px;
  margin: 0 3px 0 0;
  background: #fff;
  border: 1px solid #333;
}

input[type="checkbox"]:checked::after {
  content: "";
  position: absolute;
  left: 5px;
  top: 1px;
  width: 4px;
  height: 9px;
  border: solid #333;
  border-width: 0 2px 2px 0;
  transform: rotate(40deg);
}

.prefer {
  width: 44px;
}

.options .combo {
  width: 126px;
  height: 27px;
}

main {
  position: relative;
  flex: 1;
  min-height: 0;
  display: grid;
  grid-template-columns: 256px minmax(0, 1fr) 380px;
  grid-template-rows: minmax(0, 1fr);
  column-gap: 3px;
  padding: 2px 0 0 2px;
}

.title {
  display: flex;
  justify-content: space-between;
  align-items: center;
  height: 24px;
  padding: 0 4px;
  background: #eee;
  color: #444;
  white-space: nowrap;
}

.title svg {
  display: block;
}

/* properties palette */
.props {
  display: flex;
  flex-direction: column;
  background: #fff;
  border: solid #eee;
  border-width: 0 2px;
}

.props > .title {
  margin-left: -2px;
}

.typebox {
  display: flex;
  align-items: center;
  height: 83px;
  padding: 0 2px;
  background: #f0f0f0;
  border: 1px solid #ccc;
  color: #555;
}

.typebox .thumb {
  flex: none;
  width: 77px;
  height: 77px;
  border: 1px solid #c8c8c8;
}

.typebox p {
  flex: 1;
  margin: 0 0 0 5px;
  line-height: 19px;
  white-space: nowrap;
}

.typerow {
  display: flex;
  gap: 7px;
  height: 29px;
  padding: 1px 0;
  background: #f0f0f0;
}

.typerow .combo {
  width: 154px;
}

.typerow button {
  display: flex;
  align-items: center;
  gap: 5px;
  white-space: nowrap;
}

.params {
  width: 100%;
  table-layout: fixed;
  border-collapse: collapse;
}

.params .c1 { width: 120px; }
.params .c2 { width: 118px; }

.params tr {
  height: 21px;
}

.params th, .params td {
  padding: 0 3px;
  border: 1px dotted #aaa;
  font-weight: normal;
  line-height: 18px;
  text-align: left;
  white-space: nowrap;
}

.params th {
  padding-left: 11px;
}

.params .group th, .params .group td {
  padding-left: 2px;
  background: #d9d9d9;
  border: 0;
}

.params .dim {
  color: #999;
}

.params .editing {
  border: 1px solid #000;
}

.params input, .params svg {
  display: block;
}

.propfoot {
  display: flex;
  justify-content: space-between;
  align-items: center;
  height: 31px;
  margin-top: auto;
  padding: 0 2px 2px 2px;
  background: #f0f0f0;
}

.propfoot a {
  color: #2a78c8;
}

.propfoot button {
  width: 85px;
  height: 25px;
  background: #c6c6c6;
  border: 1px solid #bbb;
  color: #8c8c8c;
}

/* drawing view */
.view {
  display: grid;
  grid-template-columns: minmax(0, 1fr) 18px;
  grid-template-rows: 24px minmax(0, 1fr) 20px;
  background: #eee;
}

.viewtabs {
  grid-column: 1 / 3;
  display: flex;
  align-items: center;
  background: #cbcbcb;
}

.viewtabs button {
  display: flex;
  align-items: center;
  gap: 9px;
  width: 149px;
  height: 24px;
  padding: 0 6px 0 5px;
  color: #555;
}

.viewtabs .active {
  background: #fff;
  color: #333;
  font-weight: 500;
}

.viewtabs .x {
  margin-left: auto;
}

.viewtabs .more {
  margin: 0 3px 0 auto;
}

.canvas {
  overflow: hidden;
  background: #fff;
}

.canvas svg {
  display: block;
}

.cad {
  font: bold 6px "Liberation Sans", sans-serif;
}

.blue {
  fill: #1847b0;
}

.room {
  font: 11px "DejaVu Sans", sans-serif;
}

.note {
  font: 6px "Liberation Sans", sans-serif;
  fill: #555;
}

.eq {
  font: 14px "Liberation Sans", sans-serif;
  fill: #1847b0;
}

.head {
  font: 7px "Liberation Sans", sans-serif;
  fill: #0d3cae;
}

.vscroll {
  display: flex;
  flex-direction: column;
  justify-content: flex-end;
  align-items: center;
  padding-bottom: 5px;
  color: #555;
}

.viewbar {
  grid-column: 1 / 3;
  display: flex;
  align-items: center;
  gap: 5px;
}

.scale {
  width: 88px;
  padding-left: 31px;
}

.viewbar .track {
  flex: 1;
  height: 18px;
}

.viewbar .thumb {
  width: 20px;
  height: 18px;
  margin-left: 49%;
  background: #cbcbcb;
}

.viewbar .grip {
  margin: 0 0 0 8px;
}

/* project browser */
.browser {
  display: flex;
  flex-direction: column;
  margin-left: 3px;
  background: #fff;
}

.browser .title {
  padding: 0 3px 0 4px;
}

.treebox {
  flex: 1;
  min-height: 0;
  display: flex;
}

.tree {
  flex: 1;
  margin: 0;
  padding: 0 0 0 11px;
  list-style: none;
  overflow: hidden;
}

.tree li {
  display: flex;
  align-items: center;
  height: 21px;
  white-space: nowrap;
}

.tree .first {
  margin-top: 335px;
}

.tree .fill {
  height: 231px;
}

.tree svg {
  margin-right: 7px;
}

.g {
  position: relative;
  align-self: stretch;
  width: 23px;
  border-left: 1px dotted #999;
}

.n {
  width: 23px;
}

.g.t, .d {
  width: 21px;
}

.g.t::after, .g.s::after {
  content: "";
  position: absolute;
  left: 0;
  right: 4px;
  top: 11px;
  border-top: 1px dotted #999;
}

.g.e {
  height: 11px;
  align-self: flex-start;
}

.g.s {
  width: 13px;
}

.box {
  width: 11px;
  height: 11px;
  margin-left: -5px;
  background: #fff;
  border: 1px solid #999;
  color: #2a3f9a;
  font-size: 12px;
  line-height: 9px;
  text-align: center;
}

.d {
  width: 11px;
  margin: 2px 4px 0 0;
  border-top: 1px dotted #999;
}

.d.s {
  width: 6px;
  margin-right: 1px;
}

.treescroll {
  display: flex;
  flex-direction: column;
  align-items: center;
  width: 16px;
  padding: 4px 0;
  background: #f0f0f0;
  color: #555;
}

.treescroll .thumb {
  width: 16px;
  height: 555px;
  margin: 3px 0 auto;
  background: #cbcbcb;
}

.up {
  transform: rotate(180deg);
}

/* FindDimension window */
.dialog {
  position: absolute;
  top: 27px;
  right: 146px;
  width: 661px;
  height: 595px;
  background: #f0f0f0;
  border: 1px solid #777;
  box-shadow: 0 4px 18px rgba(0, 0, 0, 0.35);
}

.dialog header {
  display: flex;
  align-items: center;
  gap: 40px;
  height: 35px;
  padding: 0 20px 2px 8px;
  background: #fff;
}

.dialog header span {
  flex: 1;
  margin-left: -34px;
}

.dialog header button svg {
  display: block;
}

.gridbox {
  display: grid;
  grid-template-columns: minmax(0, 1fr) 18px;
  grid-template-rows: minmax(0, 1fr) 18px;
  width: 632px;
  height: 504px;
  margin: 14px 0 0 14px;
  padding: 0 0 1px 1px;
  background: #f0f0f0;
  border: 1px solid #111;
}

.data {
  width: 608px;
  table-layout: fixed;
  border-collapse: collapse;
  align-self: start;
  background: #fff;
  color: #000;
}

.w1 { width: 77px; }
.w2 { width: 90px; }
.w3 { width: 51px; }
.w4 { width: 90px; }
.w5 { width: 131px; }
.w6 { width: 63px; }

.data th {
  height: 22px;
  padding: 0 0 0 9px;
  border-right: 1px solid #e5e5e5;
  font-weight: normal;
  line-height: 20px;
  text-align: left;
}

.data th svg {
  margin-left: 14px;
}

.data td {
  height: 27px;
  padding: 0 0 2px 2px;
  border: 1px solid #a0a0a0;
  border-left: 0;
  line-height: 20px;
  white-space: nowrap;
}

.data .sel {
  background: #0078d7;
  color: #fff;
}

.data .hl {
  background: #fae100;
}

.gv {
  display: flex;
  flex-direction: column;
  align-items: center;
  padding: 4px 0;
  color: #555;
}

.gv .thumb {
  width: 18px;
  height: 80px;
  margin: 3px 0 auto;
  background: #cbcbcb;
}

.gh {
  display: flex;
  align-items: center;
  padding: 0 4px 0 3px;
}

.gh .track {
  flex: 1;
  height: 18px;
  margin: 0 4px;
}

.gh .thumb {
  width: 90%;
  height: 18px;
  background: #cbcbcb;
}

/* status bar */
.status {
  display: flex;
  height: 22px;
  padding: 6px 0 0 3px;
  background: #cbcbcb;
  border-top: 1px solid #ddd;
  overflow: hidden;
  white-space: nowrap;
}

.status .hint {
  width: 698px;
}

.status .combo {
  height: 24px;
  background: #fff;
  border: 1px solid #bbb;
}

.status .ws {
  width: 238px;
  margin: 0 12px 0 8px;
}

.status .num {
  width: 42px;
  padding-left: 6px;
}

.pad {
  margin-right: 12px;
}

.status .model {
  width: 240px;
  margin-left: 8px;
  background: #d6d6d6;
  color: #888;
}

.picks {
  display: flex;
  gap: 10px;
  margin: 0 102px 0 auto;
}

.picks svg {
  width: 20px;
  height: 20px;
}

.picks span {
  margin-left: -8px;
}
```
